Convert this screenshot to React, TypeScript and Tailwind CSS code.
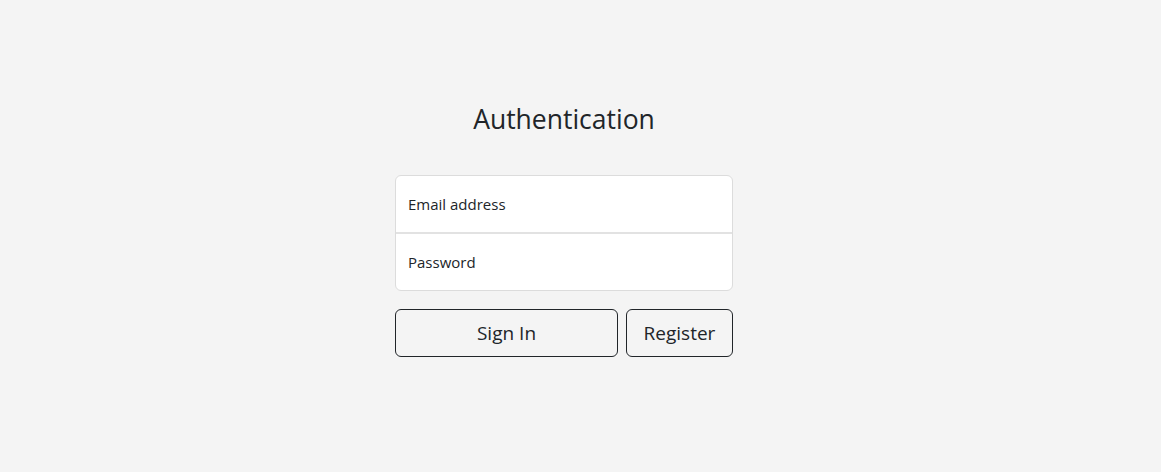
import React from 'react';

const App: React.FC = () => {
  return (
    <div
      className="min-h-[472px] w-full bg-[#f4f4f4] text-[#212529] flex justify-center pr-[33px]"
      style={{ fontFamily: '"Open Sans", "Noto Sans", sans-serif' }}
    >
      <div className="w-[338px] pt-[100px]">
        <h1 className="text-center text-[26.5px] leading-[38px] mb-[37px]">Authentication</h1>
        <div className="bg-white border border-[#dcdcdc] rounded-[6px] overflow-hidden">
          <div className="h-[58px] px-[12px] flex items-center text-[15px] border-b-2 border-[#e2e2e2]">
            Email address
          </div>
          <div className="h-[56px] px-[12px] flex items-center text-[15px]">Password</div>
        </div>
        <div className="flex gap-[8px] mt-[18px]">
          <button className="w-[223px] h-[48px] border border-[#212529] rounded-[6px] text-[19px]">
            Sign In
          </button>
          <button className="flex-1 h-[48px] border border-[#212529] rounded-[6px] text-[19px]">
            Register
          </button>
        </div>
      </div>
    </div>
  );
};

export default App;
